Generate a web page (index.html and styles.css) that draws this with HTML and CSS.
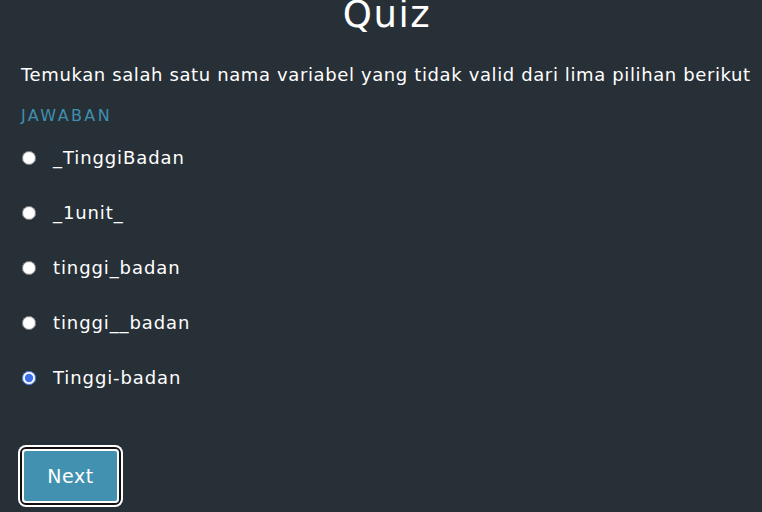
FILE: index.html
```html
<!DOCTYPE html>
<html lang="id">
<head>
<meta charset="utf-8">
<title>Quiz</title>
<link rel="stylesheet" href="styles.css">
</head>
<body>
<div class="page">
  <h1 class="title">Quiz</h1>
  <p class="question">Temukan salah satu nama variabel yang tidak valid dari lima pilihan berikut</p>
  <div class="label">JAWABAN</div>
  <form class="options">
    <label class="option"><input type="radio" name="a"><span>_TinggiBadan</span></label>
    <label class="option"><input type="radio" name="a"><span>_1unit_</span></label>
    <label class="option"><input type="radio" name="a"><span>tinggi_badan</span></label>
    <label class="option"><input type="radio" name="a"><span>tinggi__badan</span></label>
    <label class="option"><input type="radio" name="a" checked><span>Tinggi-badan</span></label>
  </form>
  <button class="next" type="button">Next</button>
</div>
</body>
</html>
```
FILE: styles.css
```css
html, body {
  margin: 0;
  padding: 0;
  background: #283037;
  color: #ffffff;
  font-family: "DejaVu Sans", "Open Sans", sans-serif;
}
.page {
  padding: 0 20px;
  overflow: hidden;
  height: 512px;
}
.title {
  margin: -7px 0 0 0;
  text-align: center;
  font-size: 37px;
  font-weight: 500;
  line-height: 44px;
  letter-spacing: 1.5px;
  padding-left: 12px;
}
.question {
  margin: 26px 0 0 1px;
  font-size: 18px;
  line-height: 24px;
  letter-spacing: 0.62px;
  white-space: nowrap;
}
.label {
  margin: 18px 0 0 1px;
  font-size: 16px;
  line-height: 22px;
  color: #3f8fb0;
  letter-spacing: 2.4px;
}
.options {
  display: flex;
  flex-direction: column;
  gap: 31px;
  margin-top: 19px;
}
.option {
  display: flex;
  align-items: center;
  gap: 17px;
  font-size: 18px;
  line-height: 24px;
  letter-spacing: 0.9px;
}
.option input {
  margin: 0 0 0 2px;
  width: 14px;
  height: 14px;
  accent-color: #3b6fe8;
}
.next {
  margin-top: 57px;
  width: 101px;
  height: 58px;
  background: #4391b0;
  color: #ffffff;
  font-family: inherit;
  font-size: 19px;
  letter-spacing: 0.5px;
  border: 2px solid #111;
  outline: 2px solid #fff;
  outline-offset: -4px;
  border-radius: 6px;
  box-shadow: 0 0 0 2px #fff;
}
```
